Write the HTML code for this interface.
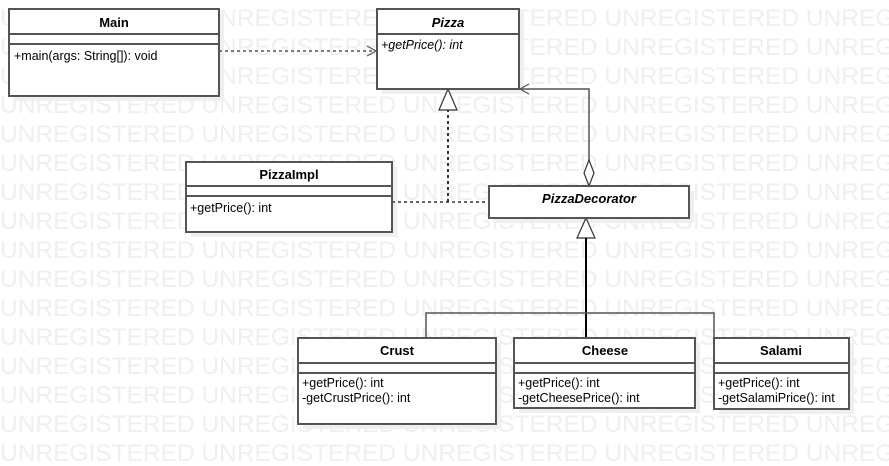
<!DOCTYPE html>
<html><head><meta charset="utf-8"><style>
html,body{margin:0;padding:0;background:#fff;width:889px;height:466px;overflow:hidden}
svg{display:block}
text{font-family:"Liberation Sans",Arial,sans-serif}
.wm{font-size:24.5px;fill:#efefef}
.t{font-size:13px;fill:#000;font-weight:bold}
.o{font-size:12.5px;fill:#000}
.b{fill:#fff;stroke:#555;stroke-width:2}
.sh{fill:#efefef}
.l{stroke:#555;stroke-width:1.2}
</style></head><body>
<svg width="889" height="466" viewBox="0 0 889 466">
<g class="wm">
<text x="0" y="26">UNREGISTERED UNREGISTERED UNREGISTERED UNREGISTERED UNREGISTERED</text>
<text x="0" y="55">UNREGISTERED UNREGISTERED UNREGISTERED UNREGISTERED UNREGISTERED</text>
<text x="0" y="84">UNREGISTERED UNREGISTERED UNREGISTERED UNREGISTERED UNREGISTERED</text>
<text x="0" y="113">UNREGISTERED UNREGISTERED UNREGISTERED UNREGISTERED UNREGISTERED</text>
<text x="0" y="142">UNREGISTERED UNREGISTERED UNREGISTERED UNREGISTERED UNREGISTERED</text>
<text x="0" y="171">UNREGISTERED UNREGISTERED UNREGISTERED UNREGISTERED UNREGISTERED</text>
<text x="0" y="200">UNREGISTERED UNREGISTERED UNREGISTERED UNREGISTERED UNREGISTERED</text>
<text x="0" y="229">UNREGISTERED UNREGISTERED UNREGISTERED UNREGISTERED UNREGISTERED</text>
<text x="0" y="258">UNREGISTERED UNREGISTERED UNREGISTERED UNREGISTERED UNREGISTERED</text>
<text x="0" y="287">UNREGISTERED UNREGISTERED UNREGISTERED UNREGISTERED UNREGISTERED</text>
<text x="0" y="316">UNREGISTERED UNREGISTERED UNREGISTERED UNREGISTERED UNREGISTERED</text>
<text x="0" y="345">UNREGISTERED UNREGISTERED UNREGISTERED UNREGISTERED UNREGISTERED</text>
<text x="0" y="374">UNREGISTERED UNREGISTERED UNREGISTERED UNREGISTERED UNREGISTERED</text>
<text x="0" y="403">UNREGISTERED UNREGISTERED UNREGISTERED UNREGISTERED UNREGISTERED</text>
<text x="0" y="432">UNREGISTERED UNREGISTERED UNREGISTERED UNREGISTERED UNREGISTERED</text>
<text x="0" y="461">UNREGISTERED UNREGISTERED UNREGISTERED UNREGISTERED UNREGISTERED</text>
</g>
<rect class="sh" x="14" y="14" width="210" height="87"/>
<rect class="sh" x="382" y="14" width="142" height="80"/>
<rect class="sh" x="191" y="167" width="206" height="70"/>
<rect class="sh" x="494" y="191" width="200" height="32"/>
<rect class="sh" x="303" y="343" width="198" height="86"/>
<rect class="sh" x="519" y="343" width="181" height="70"/>
<rect class="sh" x="719" y="343" width="135" height="71"/>
<line x1="219" y1="51" x2="374" y2="51" stroke="#555" stroke-width="1.5" stroke-dasharray="3,3"/>
<path d="M367 46 L376 51 L367 56" fill="none" stroke="#555" stroke-width="1.2"/>
<line x1="392" y1="202" x2="489" y2="202" stroke="#333" stroke-width="1.5" stroke-dasharray="3,3"/>
<line x1="448" y1="202" x2="448" y2="110" stroke="#333" stroke-width="2" stroke-dasharray="3,3"/>
<path d="M448 89 L439 110 L457 110 Z" fill="#fff" stroke="#333" stroke-width="1.2"/>
<path d="M589 160 L589 89 L520 89" fill="none" stroke="#555" stroke-width="1.5"/>
<path d="M529 84 L520 89 L529 94" fill="none" stroke="#555" stroke-width="1.2"/>
<path d="M589 160 L584 173 L589 186 L594 173 Z" fill="#fff" stroke="#333" stroke-width="1.2"/>
<path d="M586 218 L577 238 L595 238 Z" fill="#fff" stroke="#333" stroke-width="1.2"/>
<line x1="586" y1="238" x2="586" y2="338" stroke="#000" stroke-width="2"/>
<path d="M426 338 L426 313 L714 313 L714 338" fill="none" stroke="#555" stroke-width="1.5"/>
<rect class="b" x="9" y="9" width="210" height="87"/>
<line x1="9" y1="34" x2="219" y2="34" stroke="#555" stroke-width="2"/>
<line x1="9" y1="44" x2="219" y2="44" stroke="#555" stroke-width="2"/>
<text class="t" x="114" y="27" text-anchor="middle">Main</text>
<text class="o" x="14" y="60">+main(args: String[]): void</text>
<rect class="b" x="377" y="9" width="142" height="80"/>
<line x1="377" y1="34" x2="519" y2="34" stroke="#555" stroke-width="2"/>
<text class="t" x="448" y="27" text-anchor="middle" font-style="italic">Pizza</text>
<text class="o" x="381" y="49" font-style="italic">+getPrice(): int</text>
<rect class="b" x="186" y="162" width="206" height="70"/>
<line x1="186" y1="186" x2="392" y2="186" stroke="#555" stroke-width="2"/>
<line x1="186" y1="196" x2="392" y2="196" stroke="#555" stroke-width="2"/>
<text class="t" x="289" y="179" text-anchor="middle">PizzaImpl</text>
<text class="o" x="190" y="212">+getPrice(): int</text>
<rect class="b" x="489" y="186" width="200" height="32"/>
<text class="t" x="589" y="203" text-anchor="middle" font-style="italic">PizzaDecorator</text>
<rect class="b" x="298" y="338" width="198" height="86"/>
<line x1="298" y1="363" x2="496" y2="363" stroke="#555" stroke-width="2"/>
<line x1="298" y1="373" x2="496" y2="373" stroke="#555" stroke-width="2"/>
<text class="t" x="397" y="355" text-anchor="middle">Crust</text>
<text class="o" x="302" y="387">+getPrice(): int</text>
<text class="o" x="302" y="402">-getCrustPrice(): int</text>
<rect class="b" x="514" y="338" width="181" height="70"/>
<line x1="514" y1="363" x2="695" y2="363" stroke="#555" stroke-width="2"/>
<line x1="514" y1="373" x2="695" y2="373" stroke="#555" stroke-width="2"/>
<text class="t" x="605" y="355" text-anchor="middle">Cheese</text>
<text class="o" x="518" y="387">+getPrice(): int</text>
<text class="o" x="518" y="402">-getCheesePrice(): int</text>
<rect class="b" x="714" y="338" width="135" height="71"/>
<line x1="714" y1="363" x2="849" y2="363" stroke="#555" stroke-width="2"/>
<line x1="714" y1="373" x2="849" y2="373" stroke="#555" stroke-width="2"/>
<text class="t" x="781" y="355" text-anchor="middle">Salami</text>
<text class="o" x="718" y="387">+getPrice(): int</text>
<text class="o" x="718" y="402">-getSalamiPrice(): int</text>
</svg>
</body></html>
